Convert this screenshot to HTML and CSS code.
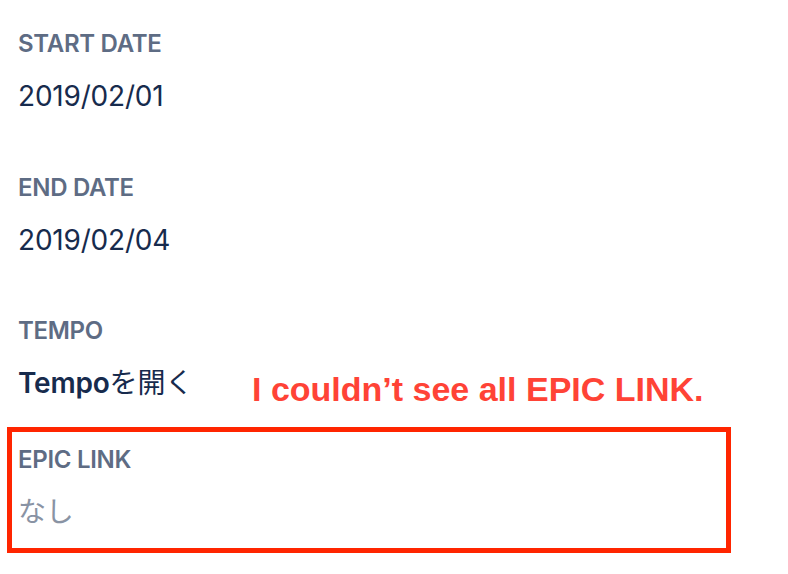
FILE: index.html
```html
<!DOCTYPE html>
<html lang="en">
<head>
  <meta charset="UTF-8">
  <title>Issue fields</title>
  <link rel="stylesheet" href="styles.css">
</head>
<body>

  <div class="fields">
    <div class="field">
      <div class="field-label">START DATE</div>
      <div class="field-value">2019/02/01</div>
    </div>

    <div class="field">
      <div class="field-label">END DATE</div>
      <div class="field-value">2019/02/04</div>
    </div>

    <div class="field short">
      <div class="field-label">TEMPO</div>
      <div class="field-value"><b>Tempo</b>を開く</div>
    </div>

    <div class="field">
      <div class="field-label">EPIC LINK</div>
      <div class="field-value empty">なし</div>
    </div>
  </div>

  <!-- annotation drawn over the screenshot -->
  <div class="note">I couldn’t see all EPIC LINK.</div>
  <div class="highlight"></div>

</body>
</html>
```

FILE: styles.css
```css
* {
  box-sizing: border-box;
}

body {
  margin: 0;
  background: #fff;
  font-family: Inter, "Noto Sans CJK JP", sans-serif;
  position: relative;
  height: 574px;
  overflow: hidden;
}

.fields {
  padding: 28px 0 0 18px;
}

.field {
  height: 143.5px;
}

.field.short {
  height: 129px;
}

.field-label {
  font-size: 24px;
  line-height: 32px;
  font-weight: 600;
  letter-spacing: -0.3px;
  color: #5e6c84;
}

.field-value {
  margin-top: 16px;
  font-size: 28px;
  line-height: 40px;
  letter-spacing: -0.2px;
  color: #172b4d;
}

.field-value b {
  font-weight: 600;
}

.field-value.empty {
  color: #8993a4;
}

.note {
  position: absolute;
  left: 252px;
  top: 367px;
  font-family: "Liberation Sans", Arial, sans-serif;
  font-weight: bold;
  font-size: 34px;
  line-height: 44px;
  color: #ff4336;
}

.highlight {
  position: absolute;
  left: 7px;
  top: 427px;
  width: 724px;
  height: 126px;
  border: 5px solid #ff2500;
}
```
